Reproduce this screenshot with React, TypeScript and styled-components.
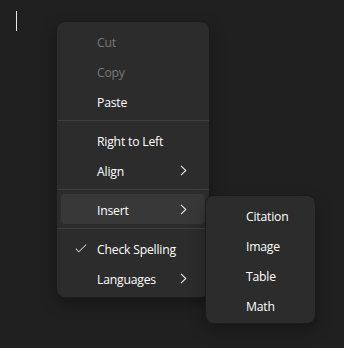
import React from "react";
import styled, { createGlobalStyle } from "styled-components";

const Global = createGlobalStyle`
  html, body { margin: 0; padding: 0; background: #202020; }
  body { width: 344px; height: 348px; overflow: hidden; font-family: "Open Sans", "Noto Sans", sans-serif; }
`;

const Editor = styled.div`
  position: relative;
  width: 344px;
  height: 348px;
  background: #202020;
`;

const Caret = styled.div`
  position: absolute;
  left: 16px;
  top: 11px;
  width: 1px;
  height: 20px;
  background: #e8e8e8;
`;

const Menu = styled.div<{ $left: number; $top: number; $width: number }>`
  position: absolute;
  left: ${(p) => p.$left}px;
  top: ${(p) => p.$top}px;
  width: ${(p) => p.$width}px;
  box-sizing: border-box;
  padding: 4px 0;
  background: #2c2c2c;
  border-radius: 8px;
  box-shadow: 0 0 0 1px #1b1b1b, 0 6px 16px rgba(0, 0, 0, 0.35);
  display: flex;
  flex-direction: column;
`;

const Item = styled.div<{ $disabled?: boolean; $active?: boolean }>`
  position: relative;
  height: 30px;
  margin: 0 4px;
  padding: 0 18px 0 36px;
  display: flex;
  align-items: center;
  border-radius: 4px;
  font-size: 12.2px;
  letter-spacing: -0.2px;
  color: ${(p) => (p.$disabled ? "#777777" : "#ffffff")};
  background: ${(p) => (p.$active ? "#383838" : "transparent")};
`;

const Label = styled.span`
  flex: 1;
  white-space: nowrap;
  padding-top: 3px;
`;

const Separator = styled.div`
  height: 1px;
  background: #3e3e3e;
  margin: 4px 0;
`;

const CheckIcon = styled.svg`
  position: absolute;
  left: 14px;
  top: 50%;
  margin-top: -4px;
`;

const Chevron = () => (
  <svg width="7" height="11" viewBox="0 0 7 11">
    <path d="M1 0.8 L5.8 5.5 L1 10.2" fill="none" stroke="#e6e6e6" strokeWidth="1.1" />
  </svg>
);

const Check = () => (
  <CheckIcon width="12" height="9" viewBox="0 0 12 9">
    <path d="M0.8 4.6 L3.8 7.8 L11.2 0.6" fill="none" stroke="#bdbdbd" strokeWidth="1.1" />
  </CheckIcon>
);

const SubMenu = styled(Menu)`
  padding: 4px 0 3px;
  z-index: 2;
`;

export default function App() {
  return (
    <>
      <Global />
      <Editor>
        <Caret />
        <Menu $left={57} $top={22} $width={152}>
          <Item $disabled><Label>Cut</Label></Item>
          <Item $disabled><Label>Copy</Label></Item>
          <Item><Label>Paste</Label></Item>
          <Separator />
          <Item><Label>Right to Left</Label></Item>
          <Item><Label>Align</Label><Chevron /></Item>
          <Separator />
          <Item $active><Label>Insert</Label><Chevron /></Item>
          <Separator />
          <Item><Check /><Label>Check Spelling</Label></Item>
          <Item><Label>Languages</Label><Chevron /></Item>
        </Menu>
        <SubMenu $left={206} $top={196} $width={109}>
          <Item><Label>Citation</Label></Item>
          <Item><Label>Image</Label></Item>
          <Item><Label>Table</Label></Item>
          <Item><Label>Math</Label></Item>
        </SubMenu>
      </Editor>
    </>
  );
}
